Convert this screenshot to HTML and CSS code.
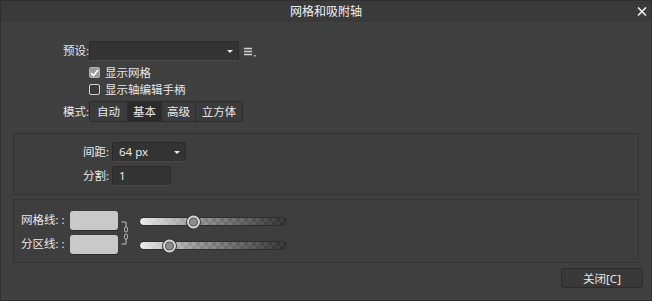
FILE: index.html
```html
<!DOCTYPE html>
<html lang="zh-CN">
<head>
    <meta charset="UTF-8">
    <meta name="viewport" content="width=device-width, initial-scale=1.0">
    <title>网格和吸附轴</title>
    <link rel="stylesheet" href="styles.css">
</head>
<body>
    <div class="window">
        <header class="titlebar">
            <span></span>
            <span class="title">网格和吸附轴</span>
            <button class="close" type="button" aria-label="关闭">
                <svg width="10" height="9" viewBox="0 0 10 9"><path d="M1 0.5 L9 8.5 M9 0.5 L1 8.5" stroke="#f0f0f0" stroke-width="1.6" fill="none"/></svg>
            </button>
        </header>

        <section class="top">
            <div class="row preset">
                <span class="lbl">预设:</span>
                <div class="select preset-select">
                    <span class="value"></span>
                    <svg class="caret" width="6" height="3" viewBox="0 0 6 3"><path d="M0 0 H6 L3 3 Z" fill="#e8e8e8"/></svg>
                </div>
                <svg class="menu-icon" width="13" height="10" viewBox="0 0 13 10"><path d="M0 1.5 H8 M0 4.5 H8 M0 7.5 H8" stroke="#d4d4d4" stroke-width="1.3"/><rect x="10" y="8" width="1.5" height="1.5" fill="#d4d4d4"/></svg>
            </div>
            <label class="check first">
                <span class="box checked">
                    <svg width="9" height="8" viewBox="0 0 9 8"><path d="M1 4.2 L3.5 6.6 L8 1" stroke="#ffffff" stroke-width="1.6" fill="none"/></svg>
                </span>
                显示网格
            </label>
            <label class="check">
                <span class="box"></span>
                显示轴编辑手柄
            </label>
            <div class="row mode">
                <span class="lbl">模式:</span>
                <div class="seg">
                    <span class="seg-item w-auto">自动</span>
                    <span class="seg-item w-basic active">基本</span>
                    <span class="seg-item w-adv">高级</span>
                    <span class="seg-item w-cube">立方体</span>
                </div>
            </div>
        </section>

        <section class="panel spacing">
            <span class="plbl">间距:</span>
            <div class="select size-select">
                <span class="value">64 px</span>
                <svg class="caret" width="6" height="3" viewBox="0 0 6 3"><path d="M0 0 H6 L3 3 Z" fill="#e8e8e8"/></svg>
            </div>
            <span class="plbl">分割:</span>
            <div class="field">1</div>
        </section>

        <section class="panel colors">
            <div class="swatches">
                <div class="swatch-row"><span class="clbl">网格线: :</span><span class="swatch"></span></div>
                <div class="swatch-row"><span class="clbl">分区线: :</span><span class="swatch"></span></div>
            </div>
            <svg class="link" width="8" height="24" viewBox="0 0 8 24">
                <path d="M0.5 1 H5 V6 M5 18 V23 H0.5" stroke="#bdbdbd" stroke-width="1" fill="none"/>
                <rect x="3.5" y="6" width="3" height="5" rx="1.5" stroke="#bdbdbd" stroke-width="1" fill="none"/>
                <rect x="3.5" y="13" width="3" height="5" rx="1.5" stroke="#bdbdbd" stroke-width="1" fill="none"/>
            </svg>
            <div class="sliders">
                <div class="slider-row"><div class="slider"><span class="thumb" style="left: 36%"></span></div></div>
                <div class="slider-row"><div class="slider"><span class="thumb" style="left: 20%"></span></div></div>
            </div>
        </section>

        <footer class="footer">
            <button class="btn" type="button">关闭[C]</button>
        </footer>
    </div>
</body>
</html>
```

FILE: styles.css
```css
* {
    box-sizing: border-box;
}

body {
    margin: 0;
    background-color: #404040;
    font-family: "Noto Sans", "Noto Sans CJK SC", sans-serif;
    font-size: 11.5px;
    line-height: 1;
    color: #e8e8e8;
}

.window {
    width: 652px;
    height: 301px;
    border: 1px solid #2f2f2f;
    display: flex;
    flex-direction: column;
}

.titlebar {
    height: 21px;
    background-color: #3a3a3a;
    display: grid;
    grid-template-columns: 1fr auto 1fr;
    align-items: center;
}

.title {
    font-size: 12px;
    color: #f2f2f2;
}

.close {
    justify-self: end;
    margin-right: 4px;
    padding: 0;
    border: none;
    background: none;
    display: flex;
}

.top {
    padding: 19px 0 0 8px;
}

.row {
    display: flex;
    align-items: center;
}

.preset {
    height: 20px;
}

.lbl {
    width: 80px;
    text-align: right;
}

.select {
    display: flex;
    align-items: center;
    justify-content: space-between;
    height: 20px;
    padding: 0 5px 0 6px;
    background-color: #333333;
    border: 1px solid #2a2a2a;
    border-bottom-color: #4a4a4a;
    border-radius: 3px;
}

.preset-select {
    width: 150px;
}

.menu-icon {
    margin-left: 5px;
    margin-top: 1px;
}

.check {
    display: flex;
    align-items: center;
    height: 17px;
    margin-left: 80px;
}

.check.first {
    margin-top: 3px;
}

.box {
    width: 11px;
    height: 11px;
    margin-right: 5px;
    border: 1px solid #d2d2d2;
    border-radius: 2px;
    background-color: #3a3a3a;
    display: flex;
    align-items: center;
    justify-content: center;
}

.box.checked {
    background-color: #9a9a9a;
    border-color: #b4b4b4;
}

.mode {
    height: 21px;
    margin-top: 3px;
}

.seg {
    display: flex;
    height: 21px;
    border: 1px solid #2c2c2c;
    border-radius: 3px;
    background-color: #3b3b3b;
    overflow: hidden;
}

.seg-item {
    display: flex;
    align-items: center;
    justify-content: center;
    border-left: 1px solid #2c2c2c;
}

.seg-item:first-child {
    border-left: none;
}

.seg-item.active {
    background-color: #2b2b2b;
}

.w-auto { width: 37px; }
.w-basic { width: 34px; }
.w-adv { width: 34px; }
.w-cube { width: 47px; }

.panel {
    margin: 0 12px;
    border: 1px solid #343434;
    background-color: #3e3e3e;
}

.spacing {
    margin-top: 11px;
    padding: 8px 0;
    display: grid;
    grid-template-columns: 95px auto;
    column-gap: 3px;
    row-gap: 4px;
    justify-content: start;
    align-items: center;
}

.plbl {
    text-align: right;
}

.size-select {
    width: 74px;
}

.field {
    width: 59px;
    height: 20px;
    padding-left: 6px;
    display: flex;
    align-items: center;
    background-color: #333333;
    border: 1px solid #2a2a2a;
    border-bottom-color: #4a4a4a;
    border-radius: 3px;
}

.colors {
    margin-top: 4px;
    padding: 9px 0 7px 7px;
    display: flex;
    align-items: center;
}

.swatches,
.sliders {
    display: flex;
    flex-direction: column;
    gap: 5px;
}

.swatch-row,
.slider-row {
    display: flex;
    align-items: center;
    height: 19px;
}

.clbl {
    width: 49px;
}

.swatch {
    width: 48px;
    height: 19px;
    background-color: #c9c9c9;
    border-radius: 3px;
    box-shadow: 0 1px 0 #2c2c2c;
}

.link {
    margin-left: 3px;
    margin-top: 1px;
}

.sliders {
    margin-left: 10px;
    padding-top: 3px;
}

.slider {
    position: relative;
    width: 148px;
    height: 9px;
    border-radius: 5px;
    border: 1px solid #2e2e2e;
    background:
        linear-gradient(to right, rgba(236, 236, 236, 1), rgba(232, 232, 232, 0.45) 40%, rgba(40, 40, 40, 0.65)),
        repeating-conic-gradient(#5a5a5a 0 25%, #3a3a3a 0 50%) 0 0 / 8px 8px;
}

.thumb {
    position: absolute;
    top: 50%;
    width: 13px;
    height: 13px;
    margin-left: -6px;
    transform: translateY(-50%);
    border-radius: 50%;
    border: 2px solid #d4d4d4;
    background-color: #8c8c8c;
    box-shadow: inset 0 0 0 1px #4a4a4a, 0 0 0 1px #3a3a3a;
}

.footer {
    display: flex;
    justify-content: flex-end;
    padding: 5px 8px 0 0;
}

.btn {
    width: 82px;
    height: 20px;
    padding: 0;
    font-family: inherit;
    font-size: 11.5px;
    color: #e8e8e8;
    background-color: #393939;
    border: 1px solid #2c2c2c;
    border-radius: 3px;
}
```
